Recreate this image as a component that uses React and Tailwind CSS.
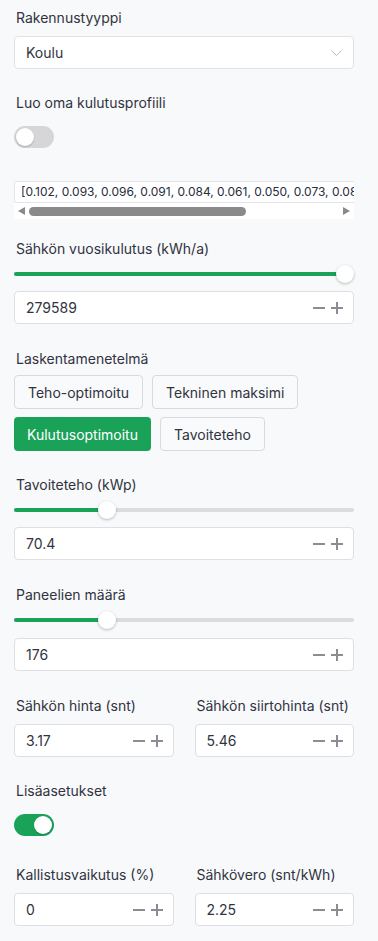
import React from 'react';

const labelCls = "h-[20px] leading-[20px] text-[14px] text-[#31333f]";

function Label({ children, className = "" }) {
  return <div className={`${labelCls} ${className}`}>{children}</div>;
}

function Stepper() {
  return (
    <div className="flex items-center gap-[6px] text-[#8b8d95]">
      <svg width="12" height="12" viewBox="0 0 12 12">
        <path d="M0 6h12" stroke="currentColor" strokeWidth="2" />
      </svg>
      <svg width="12" height="12" viewBox="0 0 12 12">
        <path d="M0 6h12M6 0v12" stroke="currentColor" strokeWidth="2" />
      </svg>
    </div>
  );
}

function NumberInput({ value, className = "" }) {
  return (
    <div className={`h-[33px] bg-white border border-[#dedfe4] rounded-[4px] flex items-center justify-between pl-[11px] pr-[10px] ${className}`}>
      <span className="text-[14px] text-[#31333f]">{value}</span>
      <Stepper />
    </div>
  );
}

function Slider({ pct }) {
  return (
    <div className="relative h-[30px] flex items-center">
      <div className="w-full h-[4px] rounded-full bg-[#dcdcdf] relative">
        <div className="absolute left-0 top-0 h-[4px] rounded-full bg-[#1aa259]" style={{ width: `calc(9px + (100% - 18px) * ${pct})` }} />
      </div>
      <div
        className="absolute w-[18px] h-[18px] rounded-full bg-white shadow-[0_1px_3px_rgba(0,0,0,0.25)]"
        style={{ left: `calc((100% - 18px) * ${pct})` }}
      />
    </div>
  );
}

function Toggle({ on }) {
  return (
    <div className={`w-[40px] h-[22px] rounded-full relative ${on ? 'bg-[#1aa259]' : 'bg-[#d6d6d9]'}`}>
      <div className={`absolute top-[2px] w-[18px] h-[18px] rounded-full bg-white shadow-[0_1px_2px_rgba(0,0,0,0.2)] ${on ? 'left-[20px]' : 'left-[2px]'}`} />
    </div>
  );
}

function Btn({ children, active }) {
  return (
    <button
      className={`h-[34px] px-[13px] rounded-[4px] text-[14px] ${active ? 'bg-[#1aa259] text-white' : 'bg-[#f9fafb] border border-[#d9dadf] text-[#31333f]'}`}
    >
      {children}
    </button>
  );
}

export default function App() {
  const profile = "[0.102, 0.093, 0.096, 0.091, 0.084, 0.061, 0.050, 0.073, 0.085, 0.112, 0.134, 0.151, 0.149]";
  return (
    <div className="min-h-[941px] bg-[#f8f9fb] pl-[14px] pr-[24px] pt-[8px] font-['Inter',sans-serif]">
      <Label className="pl-[2px]">Rakennustyyppi</Label>
      <div className="mt-[8px] h-[33px] bg-white border border-[#e1e2e6] rounded-[4px] flex items-center justify-between pl-[11px] pr-[11px]">
        <span className="text-[14px] text-[#31333f]">Koulu</span>
        <svg width="11" height="6" viewBox="0 0 11 6" fill="none">
          <path d="M0.5 0.5l5 5 5-5" stroke="#b9bac1" strokeWidth="1" />
        </svg>
      </div>

      <Label className="mt-[24px] pl-[2px]">Luo oma kulutusprofiili</Label>
      <div className="mt-[13px]">
        <Toggle on={false} />
      </div>

      <div className="mt-[33px] overflow-hidden">
        <div className="w-max whitespace-nowrap h-[22px] leading-[20px] bg-white border border-[#e4e5ea] rounded-[2px] pl-[6px] pr-[6px] text-[12px] text-[#262d3d]">
          {profile}
        </div>
        <div className="h-[16px] bg-white flex items-center px-[4px] gap-[4px]">
          <svg width="7" height="8" viewBox="0 0 7 8"><path d="M0 4l7-4v8z" fill="#8a8a8a" /></svg>
          <div className="w-[217px] h-[9px] rounded-full bg-[#8a8a8a]" />
          <div className="flex-1" />
          <svg width="7" height="8" viewBox="0 0 7 8"><path d="M7 4l-7-4v8z" fill="#8a8a8a" /></svg>
        </div>
      </div>

      <Label className="mt-[20px] pl-[2px]">Sähkön vuosikulutus (kWh/a)</Label>
      <Slider pct={1} />
      <NumberInput value="279589" className="mt-[2px]" />

      <Label className="mt-[25px] pl-[2px]">Laskentamenetelmä</Label>
      <div className="mt-[6px] flex flex-wrap gap-x-[9px] gap-y-[8px]">
        <Btn>Teho-optimoitu</Btn>
        <Btn>Tekninen maksimi</Btn>
        <Btn active>Kulutusoptimoitu</Btn>
        <Btn>Tavoiteteho</Btn>
      </div>

      <Label className="mt-[24px] pl-[2px]">Tavoiteteho (kWp)</Label>
      <Slider pct={0.26} />
      <NumberInput value="70.4" className="mt-[2px]" />

      <Label className="mt-[25px] pl-[2px]">Paneelien määrä</Label>
      <Slider pct={0.26} />
      <NumberInput value="176" className="mt-[3px]" />

      <div className="mt-[25px] grid grid-cols-2 gap-x-[21px]">
        <div>
          <Label className="pl-[2px]">Sähkön hinta (snt)</Label>
          <NumberInput value="3.17" className="mt-[8px]" />
        </div>
        <div>
          <Label className="pl-[2px]">Sähkön siirtohinta (snt)</Label>
          <NumberInput value="5.46" className="mt-[8px]" />
        </div>
      </div>

      <Label className="mt-[24px] pl-[2px]">Lisäasetukset</Label>
      <div className="mt-[13px]">
        <Toggle on />
      </div>

      <div className="mt-[29px] grid grid-cols-2 gap-x-[21px]">
        <div>
          <Label className="pl-[2px]">Kallistusvaikutus (%)</Label>
          <NumberInput value="0" className="mt-[8px]" />
        </div>
        <div>
          <Label className="pl-[2px]">Sähkövero (snt/kWh)</Label>
          <NumberInput value="2.25" className="mt-[8px]" />
        </div>
      </div>
    </div>
  );
}
